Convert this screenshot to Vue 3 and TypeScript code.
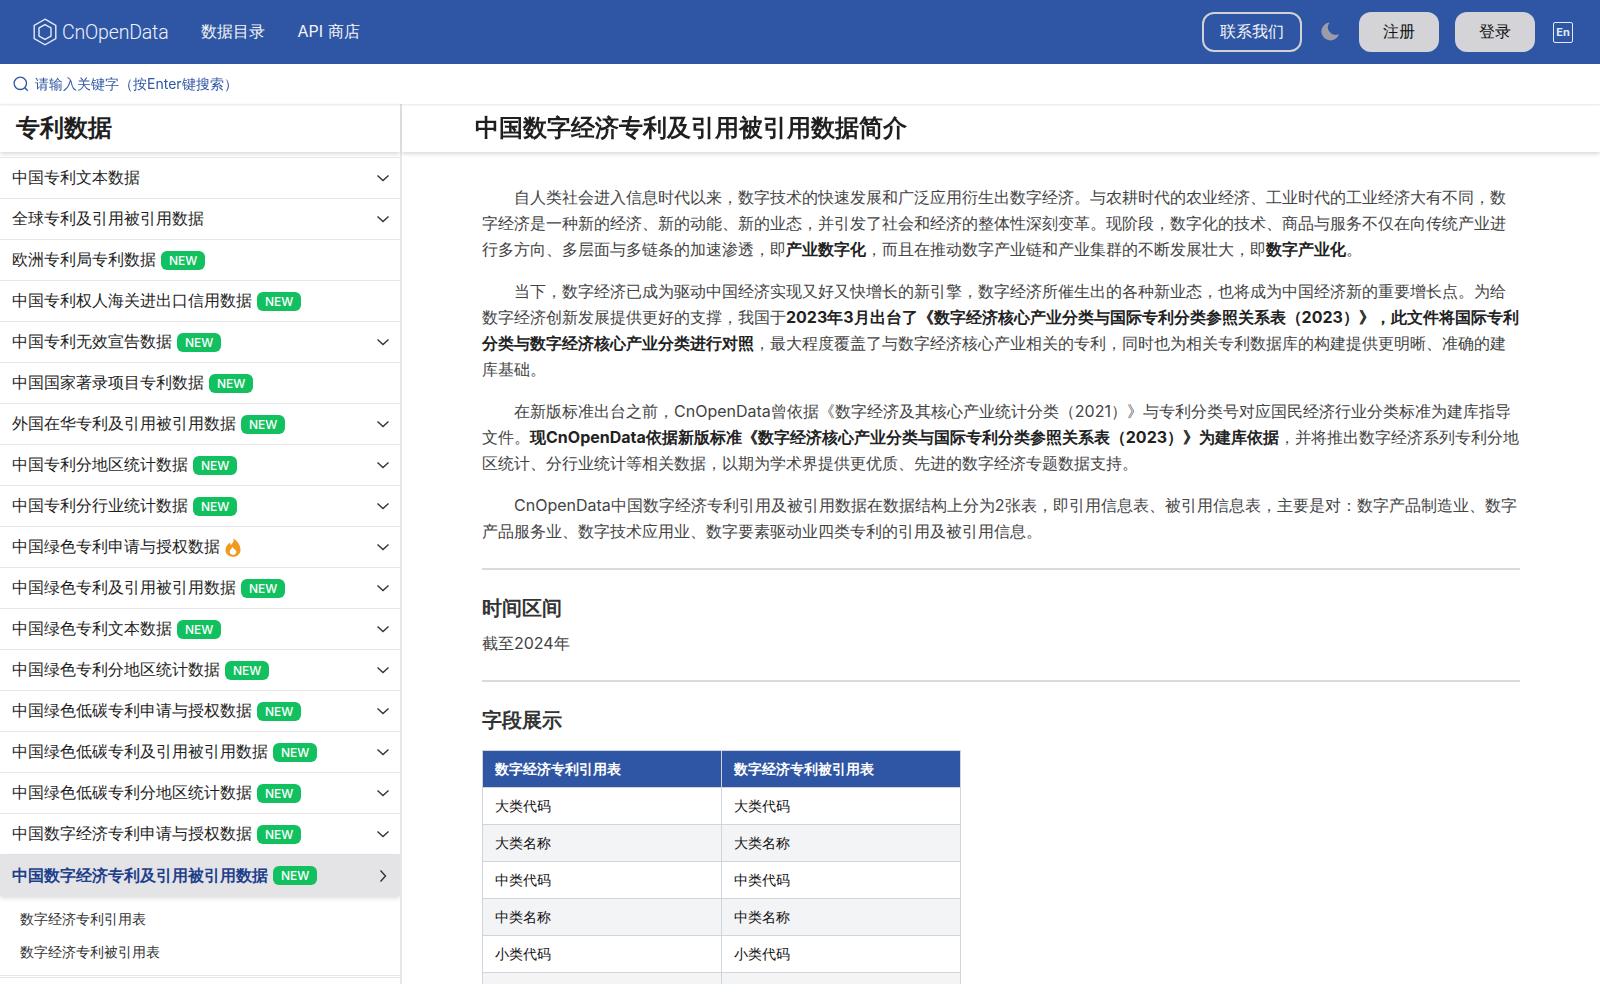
<script setup lang="ts">
import { onMounted, ref } from 'vue'

interface SideItem {
  name: string
  badge?: 'new' | 'hot'
  more?: boolean
  active?: boolean
  subs?: string[]
}

const sideItems: SideItem[] = [
  { name: '中国专利文本数据', more: true },
  { name: '全球专利及引用被引用数据', more: true },
  { name: '欧洲专利局专利数据', badge: 'new' },
  { name: '中国专利权人海关进出口信用数据', badge: 'new' },
  { name: '中国专利无效宣告数据', badge: 'new', more: true },
  { name: '中国国家著录项目专利数据', badge: 'new' },
  { name: '外国在华专利及引用被引用数据', badge: 'new', more: true },
  { name: '中国专利分地区统计数据', badge: 'new', more: true },
  { name: '中国专利分行业统计数据', badge: 'new', more: true },
  { name: '中国绿色专利申请与授权数据', badge: 'hot', more: true },
  { name: '中国绿色专利及引用被引用数据', badge: 'new', more: true },
  { name: '中国绿色专利文本数据', badge: 'new', more: true },
  { name: '中国绿色专利分地区统计数据', badge: 'new', more: true },
  { name: '中国绿色低碳专利申请与授权数据', badge: 'new', more: true },
  { name: '中国绿色低碳专利及引用被引用数据', badge: 'new', more: true },
  { name: '中国绿色低碳专利分地区统计数据', badge: 'new', more: true },
  { name: '中国数字经济专利申请与授权数据', badge: 'new', more: true },
  {
    name: '中国数字经济专利及引用被引用数据',
    badge: 'new',
    more: true,
    active: true,
    subs: ['数字经济专利引用表', '数字经济专利被引用表'],
  },
]

// 列表上方已滚出可视区的条目
const hiddenAbove = ['中国专利申请数据', '中国专利授权数据', '中国专利引用数据', '中国专利转让数据', '中国专利许可数据', '中国专利质押数据']

const tableRows = ['大类代码', '大类名称', '中类代码', '中类名称', '小类代码', '小类名称', '专利申请号', '专利名称', '申请人', '申请日期', '公开号', '公开日期', '引用专利号', '引用类型', '引用日期', '引用次数']

const sideList = ref<HTMLElement | null>(null)

onMounted(() => {
  if (sideList.value) sideList.value.scrollTop = 241
})
</script>

<template>
  <div class="page">
    <header class="topbar">
      <div class="brand">
        <svg class="brand-mark" viewBox="0 0 24 28" aria-hidden="true">
          <path d="M12 1.200 22.800 7.500v13L12 26.800 1.200 20.500v-13z" />
          <path d="M12 6.600 18 10v8l-6 3.400L6 18v-8z" />
        </svg>
        <span class="brand-name">CnOpenData</span>
      </div>
      <nav class="nav">
        <a>数据目录</a>
        <a>API 商店</a>
      </nav>
      <div class="actions">
        <button class="btn-outline">联系我们</button>
        <svg class="moon" viewBox="0 0 20 20" aria-hidden="true">
          <path d="M9.200 1A9.500 9.500 0 1 0 19 13.200 8 8 0 0 1 9.200 1z" />
        </svg>
        <button class="btn-solid">注册</button>
        <button class="btn-solid">登录</button>
        <span class="lang">En</span>
      </div>
    </header>

    <div class="search">
      <svg class="search-icon" viewBox="0 0 16 16" aria-hidden="true">
        <circle cx="7.300" cy="7.300" r="6.200" />
        <path d="m11.800 11.800 3 3" />
      </svg>
      <span>请输入关键字（按Enter键搜索）</span>
    </div>

    <div class="body">
      <aside class="side">
        <h2 class="side-title">专利数据</h2>
        <div ref="sideList" class="side-list scroller">
          <div v-for="name in hiddenAbove" :key="name" class="side-row">
            <span class="side-name">{{ name }}</span>
          </div>
          <template v-for="item in sideItems" :key="item.name">
            <div class="side-row" :class="{ active: item.active }">
              <span class="side-name">{{ item.name }}</span>
              <span v-if="item.badge === 'new'" class="badge">NEW</span>
              <svg v-if="item.badge === 'hot'" class="flame" viewBox="0 0 16 19" aria-hidden="true">
                <path d="M8.600.4c.6 3-1 4.600-2.700 6.500C5.300 6.300 5 5.500 5 4.400 2.500 6.200.5 8.800.5 12c0 3.900 3.200 6.700 7.500 6.700s7.500-2.900 7.500-6.800C15.500 7.300 12.500 2.800 8.600.4zM8 16.800c-1.900 0-3.300-1.300-3.300-3 0-1.900 1.600-3 3-4.900.6 1.300 1.100 1.700 2 2.500 1 .8 1.600 1.500 1.600 2.500 0 1.700-1.400 2.900-3.300 2.900z" />
              </svg>
              <svg v-if="item.more" class="chevron" viewBox="0 0 12 12" aria-hidden="true">
                <path v-if="item.active" d="m3.500 .5 5 5.500-5 5.500" />
                <path v-else d="m.5 3.500 5.500 5 5.500-5" />
              </svg>
            </div>
            <div v-if="item.subs" class="side-subs">
              <a v-for="sub in item.subs" :key="sub">{{ sub }}</a>
            </div>
          </template>
          <div class="side-tail"></div>
        </div>
      </aside>

      <main class="main scroller">
        <h1 class="main-title">中国数字经济专利及引用被引用数据简介</h1>
        <article class="doc">
          <p>自人类社会进入信息时代以来，数字技术的快速发展和广泛应用衍生出数字经济。与农耕时代的农业经济、工业时代的工业经济大有不同，数字经济是一种新的经济、新的动能、新的业态，并引发了社会和经济的整体性深刻变革。现阶段，数字化的技术、商品与服务不仅在向传统产业进行多方向、多层面与多链条的加速渗透，即<strong>产业数字化</strong>，而且在推动数字产业链和产业集群的不断发展壮大，即<strong>数字产业化</strong>。</p>
          <p>当下，数字经济已成为驱动中国经济实现又好又快增长的新引擎，数字经济所催生出的各种新业态，也将成为中国经济新的重要增长点。为给数字经济创新发展提供更好的支撑，我国于<strong>2023年3月出台了《数字经济核心产业分类与国际专利分类参照关系表（2023）》，此文件将国际专利分类与数字经济核心产业分类进行对照</strong>，最大程度覆盖了与数字经济核心产业相关的专利，同时也为相关专利数据库的构建提供更明晰、准确的建库基础。</p>
          <p>在新版标准出台之前，CnOpenData曾依据《数字经济及其核心产业统计分类（2021）》与专利分类号对应国民经济行业分类标准为建库指导文件。<strong>现CnOpenData依据新版标准《数字经济核心产业分类与国际专利分类参照关系表（2023）》为建库依据</strong>，并将推出数字经济系列专利分地区统计、分行业统计等相关数据，以期为学术界提供更优质、先进的数字经济专题数据支持。</p>
          <p>CnOpenData中国数字经济专利引用及被引用数据在数据结构上分为2张表，即引用信息表、被引用信息表，主要是对：数字产品制造业、数字产品服务业、数字技术应用业、数字要素驱动业四类专利的引用及被引用信息。</p>
          <hr />
          <h3>时间区间</h3>
          <p class="plain">截至2024年</p>
          <hr />
          <h3>字段展示</h3>
          <div class="table-wrap scroller">
            <table>
              <thead>
                <tr>
                  <th>数字经济专利引用表</th>
                  <th>数字经济专利被引用表</th>
                </tr>
              </thead>
              <tbody>
                <tr v-for="row in tableRows" :key="row">
                  <td>{{ row }}</td>
                  <td>{{ row }}</td>
                </tr>
              </tbody>
            </table>
          </div>
          <div class="doc-tail"></div>
        </article>
      </main>
    </div>
  </div>
</template>

<style>
body {
  overflow: hidden;
  background: #fff;
}
</style>

<style scoped>
.page {
  height: calc(100vh - 16px);
  display: flex;
  flex-direction: column;
  font-family: Inter, sans-serif;
  text-spacing-trim: space-all;
  color: #1f2937;
}

.scroller::-webkit-scrollbar {
  width: 15px;
}
.scroller::-webkit-scrollbar-track {
  background: #f0f0f0;
}
.scroller::-webkit-scrollbar-thumb {
  background: #c0c0c0;
  border-left: 2px solid #f0f0f0;
  border-right: 2px solid #f0f0f0;
}
.scroller::-webkit-scrollbar-button:single-button {
  height: 17px;
  background-color: #f0f0f0;
  background-repeat: no-repeat;
}
.scroller::-webkit-scrollbar-button:single-button:vertical:decrement {
  background-image: conic-gradient(from 150deg at 50% 5px, #999 60deg, transparent 0);
  background-size: 8px 9px;
  background-position: center 3px;
}
.scroller::-webkit-scrollbar-button:single-button:vertical:increment {
  background-image: conic-gradient(from -30deg at 50% 4px, #505050 60deg, transparent 0);
  background-size: 8px 5px;
  background-position: center 7px;
}

.topbar {
  height: 64px;
  flex-shrink: 0;
  display: flex;
  align-items: center;
  padding: 0 27px 0 33px;
  background: #2f56a4;
  color: #fff;
}
.brand {
  display: flex;
  align-items: center;
  gap: 5px;
}
.brand-mark {
  width: 24px;
  height: 28px;
  fill: none;
  stroke: #e6eaf4;
  stroke-width: 1.4;
}
.brand-name {
  display: inline-block;
  margin-right: -8px;
  font-family: Roboto, sans-serif;
  font-size: 21px;
  font-weight: 300;
  letter-spacing: -0.2px;
  color: #eef1f8;
  transform: scaleX(0.93);
  transform-origin: left center;
}
.nav {
  display: flex;
  gap: 33px;
  margin-left: 32px;
  font-size: 16px;
  color: #f3f4f6;
}
.actions {
  margin-left: auto;
  display: flex;
  align-items: center;
}
.actions button {
  height: 40px;
  font: inherit;
  font-size: 16px;
  border-radius: 12px;
}
.btn-outline {
  width: 100px;
  background: transparent;
  border: 2px solid #d1d1d6;
  color: #f3f4f6;
}
.moon {
  width: 19px;
  height: 20px;
  margin: 0 19px;
  fill: #9a9ca8;
  transform: translateY(-1px);
}
.btn-solid {
  width: 80px;
  border: 0;
  background: #d4d4d8;
  color: #111;
}
.btn-solid + .btn-solid {
  margin-left: 16px;
}
.lang {
  width: 20px;
  height: 21px;
  margin-left: 18px;
  box-sizing: border-box;
  display: flex;
  align-items: center;
  justify-content: center;
  border: 1px solid #e6eaf4;
  border-radius: 2px;
  font-size: 11px;
  font-weight: 700;
  color: #e6eaf4;
}

.search {
  height: 40px;
  flex-shrink: 0;
  display: flex;
  align-items: center;
  gap: 6px;
  padding-left: 13px;
  font-size: 14px;
  color: #2f56a4;
  box-shadow: 0 1px 2px rgba(0, 0, 0, 0.1);
  position: relative;
  z-index: 3;
}
.search-icon {
  width: 16px;
  height: 16px;
  fill: none;
  stroke: #2f56a4;
  stroke-width: 1.3;
}

.body {
  flex: 1;
  min-height: 0;
  display: flex;
}

.side {
  width: 402px;
  flex-shrink: 0;
  box-sizing: border-box;
  display: flex;
  flex-direction: column;
  border-right: 2px solid #e5e7eb;
  padding-bottom: 6px;
}
.side-title {
  height: 48px;
  flex-shrink: 0;
  box-sizing: border-box;
  margin: 0;
  padding-left: 16px;
  font-size: 24px;
  line-height: 48px;
  font-weight: 700;
  color: #1f1f1f;
  box-shadow: 0 2px 4px rgba(0, 0, 0, 0.15);
  position: relative;
  z-index: 2;
}
.side-list {
  flex: 1;
  min-height: 0;
  margin-top: 1px;
  overflow-y: scroll;
  border-bottom: 1px solid #e5e7eb;
}
.side-row {
  height: 41px;
  box-sizing: border-box;
  display: flex;
  align-items: center;
  padding: 0 11px 0 12px;
  border-bottom: 1px solid #e5e7eb;
  font-size: 16px;
  color: #1f1f1f;
}
.side-row.active {
  background: #e4e4e7;
  color: #1e3f8c;
  font-weight: 700;
  border-bottom: 0;
  box-shadow: 0 2px 5px rgba(0, 0, 0, 0.15);
  position: relative;
}
.badge {
  margin-left: 5px;
  height: 19px;
  padding: 0 8px;
  border-radius: 6px;
  background: #12c060;
  color: #fff;
  font-size: 12px;
  font-weight: 500;
  line-height: 19px;
}
.flame {
  width: 16px;
  height: 19px;
  margin-left: 5px;
  fill: #f29a1e;
}
.chevron {
  width: 12px;
  height: 12px;
  margin-left: auto;
  fill: none;
  stroke: #333;
  stroke-width: 1.4;
}
.side-subs {
  padding: 6px 0 7px 20px;
  border-bottom: 1px solid #e5e7eb;
  font-size: 14px;
  line-height: 33px;
  color: #333;
}
.side-subs a {
  display: block;
}
.side-tail {
  height: 1215px;
}

.main {
  flex: 1;
  min-width: 0;
  overflow-y: scroll;
}
.main-title {
  position: sticky;
  top: 0;
  height: 48px;
  margin: 0;
  padding-left: 73px;
  background: #fff;
  font-size: 24px;
  line-height: 48px;
  font-weight: 700;
  color: #1f1f1f;
  box-shadow: 0 2px 4px rgba(0, 0, 0, 0.15);
  z-index: 2;
}
.doc {
  padding: 32px 80px 0;
  font-size: 16px;
  line-height: 26px;
  color: #444;
}
.doc p {
  margin: 0 0 16px;
  text-indent: 32px;
}
.doc p.plain {
  text-indent: 0;
  color: #444;
}
.doc strong {
  color: #222;
  font-weight: 700;
}
.doc hr {
  height: 2px;
  margin: 24px 0;
  border: 0;
  background: #d9dbde;
}
.doc h3 {
  margin: 0 0 8px;
  font-size: 20px;
  line-height: 28px;
  font-weight: 700;
  color: #333;
}
.table-wrap {
  height: 520px;
  margin-top: 16px;
  overflow-y: scroll;
}
table {
  width: 479px;
  border-collapse: collapse;
  font-size: 14px;
  line-height: 20px;
  table-layout: fixed;
}
th,
td {
  height: 37px;
  box-sizing: border-box;
  padding: 0 12px;
  border: 1px solid #d1d5db;
  text-align: left;
}
th {
  background: #2f56a4;
  color: #fff;
  font-weight: 700;
}
td {
  color: #111;
}
tbody tr:nth-child(even) {
  background: #f3f4f6;
}
.doc-tail {
  height: 2040px;
}
</style>
